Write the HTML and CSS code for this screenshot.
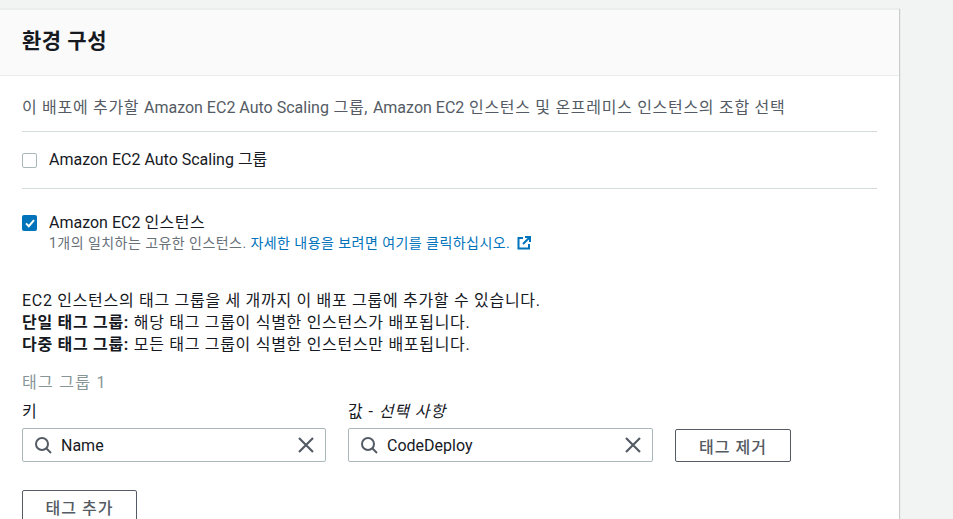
FILE: index.html
```html
<!DOCTYPE html>
<html lang="ko">

<head>
    <meta charset="UTF-8" />
    <meta name="viewport" content="width=device-width, initial-scale=1" />
    <title>환경 구성</title>
    <link rel="stylesheet" href="styles.css">
</head>

<body>

    <div class="card">
        <div class="card-header">
            <h2>환경 구성</h2>
        </div>

        <div class="card-body">
            <p class="desc">이 배포에 추가할 <span class="en">Amazon EC2 Auto Scaling</span> 그룹, <span class="en">Amazon EC2</span> 인스턴스 및 온프레미스 인스턴스의 조합 선택</p>

            <div class="option option-asg">
                <span class="check"></span>
                <div class="option-label">Amazon EC2 Auto Scaling 그룹</div>
            </div>

            <div class="option option-ec2">
                <span class="check checked">
                    <svg width="14" height="14" viewBox="0 0 14 14">
                        <path d="M3 7.4l2.8 2.8L11 4.2" fill="none" stroke="#fff" stroke-width="2" />
                    </svg>
                </span>
                <div>
                    <div class="option-label">Amazon EC2 <span class="ko">인스턴스</span></div>
                    <div class="option-sub">1개의 일치하는 고유한 인스턴스. <a href="#">자세한 내용을 보려면 여기를 클릭하십시오.</a>
                        <svg class="ext" width="14" height="14" viewBox="0 0 14 14">
                            <path d="M6 2H1.5v10.5H12V8" fill="none" stroke="#0073bb" stroke-width="2" />
                            <path d="M8 1h5v5M12.5 1.5L6 8" fill="none" stroke="#0073bb" stroke-width="2" />
                        </svg>
                    </div>
                </div>
            </div>

            <div class="info">
                EC2 인스턴스의 태그 그룹을 세 개까지 이 배포 그룹에 추가할 수 있습니다.<br>
                <b>단일 태그 그룹:</b> 해당 태그 그룹이 식별한 인스턴스가 배포됩니다.<br>
                <b>다중 태그 그룹:</b> 모든 태그 그룹이 식별한 인스턴스만 배포됩니다.
            </div>

            <div class="group-title">태그 그룹 1</div>

            <div class="tag-row">
                <div class="field">
                    <label>키</label>
                    <div class="search">
                        <svg width="20" height="20" viewBox="0 0 20 20">
                            <circle cx="9" cy="9" r="6" fill="none" stroke="#545b64" stroke-width="2" />
                            <path d="M13.5 13.5L18 18" stroke="#545b64" stroke-width="2" />
                        </svg>
                        <span class="search-text">Name</span>
                        <svg width="18" height="18" viewBox="0 0 18 18">
                            <path d="M2 2l14 14M16 2L2 16" stroke="#545b64" stroke-width="2.2" />
                        </svg>
                    </div>
                </div>
                <div class="field">
                    <label>값 - <i>선택 사항</i></label>
                    <div class="search">
                        <svg width="20" height="20" viewBox="0 0 20 20">
                            <circle cx="9" cy="9" r="6" fill="none" stroke="#545b64" stroke-width="2" />
                            <path d="M13.5 13.5L18 18" stroke="#545b64" stroke-width="2" />
                        </svg>
                        <span class="search-text">CodeDeploy</span>
                        <svg width="18" height="18" viewBox="0 0 18 18">
                            <path d="M2 2l14 14M16 2L2 16" stroke="#545b64" stroke-width="2.2" />
                        </svg>
                    </div>
                </div>
                <button class="btn btn-remove">태그 제거</button>
            </div>

            <button class="btn btn-add">태그 추가</button>
        </div>
    </div>

</body>

</html>
```

FILE: styles.css
```css
html,
body {
    height: 100%;
    overflow: hidden;
}

body {
    font-family: Roboto, "Noto Sans CJK KR", sans-serif;
    font-size: 16px;
    background: #f2f3f3;
    color: #16191f;
    margin: 0;
    padding: 9px 0 0;
    box-sizing: border-box;
}

.card {
    width: 899px;
    height: 520px;
    background: #fff;
    border-top: 1px solid #eaeded;
    box-shadow: 1px 0 1px 0 #c8cccc;
}

.card-header {
    height: 66px;
    box-sizing: border-box;
    padding: 0 22px 4px;
    display: flex;
    align-items: center;
    background: #fafafa;
    border-bottom: 1px solid #eaeded;
}

h2 {
    margin: 0;
    font-size: 21px;
    font-weight: 700;
    line-height: 22px;
    letter-spacing: 0.5px;
}

.card-body {
    padding: 0 22px;
}

.desc {
    margin: 0;
    padding: 22px 0 13px;
    line-height: 20px;
    letter-spacing: 0.7px;
    color: #545b64;
    border-bottom: 1px solid #d5dbdb;
}

.en {
    letter-spacing: 0;
}

.ko {
    letter-spacing: 0.5px;
}

.option {
    display: flex;
    gap: 12px;
}

.option-asg {
    height: 57px;
    box-sizing: border-box;
    padding-top: 18px;
    border-bottom: 1px solid #d5dbdb;
}

.option-ec2 {
    padding-top: 23px;
}

.option-ec2 .option-label {
    padding-top: 1px;
}

.check {
    flex: none;
    width: 15px;
    height: 15px;
    margin-top: 3px;
    box-sizing: border-box;
    border: 1px solid #aab7b8;
    border-radius: 2px;
    background: #fff;
}

.check.checked {
    display: flex;
    height: 16px;
    border: none;
    background: #0073bb;
    align-items: center;
    justify-content: center;
}

.option-label {
    line-height: 20px;
}

.option-sub {
    font-size: 14px;
    line-height: 20px;
    letter-spacing: 0.45px;
    color: #687078;
}

a {
    color: #0073bb;
    text-decoration: none;
}

.ext {
    vertical-align: -2px;
    margin-left: 3px;
}

.info {
    margin-top: 37px;
    line-height: 22px;
    letter-spacing: 0.7px;
}

.group-title {
    margin-top: 17px;
    line-height: 20px;
    letter-spacing: 1.3px;
    color: #879596;
}

.tag-row {
    display: flex;
    align-items: flex-end;
    gap: 22px;
    margin-top: 9px;
}

.field {
    width: 304px;
}

.field + .field {
    width: 305px;
}

label {
    display: block;
    line-height: 20px;
    letter-spacing: 0.9px;
    margin-bottom: 6px;
}

.search {
    height: 34px;
    box-sizing: border-box;
    display: flex;
    align-items: center;
    gap: 8px;
    padding: 0 10px 0 10px;
    border: 1px solid #aab7b8;
    border-radius: 2px;
}

.search-text {
    flex: 1;
}

.btn {
    display: block;
    font: inherit;
    font-weight: 500;
    letter-spacing: 1px;
    height: 33px;
    padding: 0;
    background: #fff;
    color: #545b64;
    border: 1px solid #545b64;
    border-radius: 2px;
}

.btn-remove {
    width: 116px;
}

.btn-add {
    width: 115px;
    margin-top: 28px;
}
```
